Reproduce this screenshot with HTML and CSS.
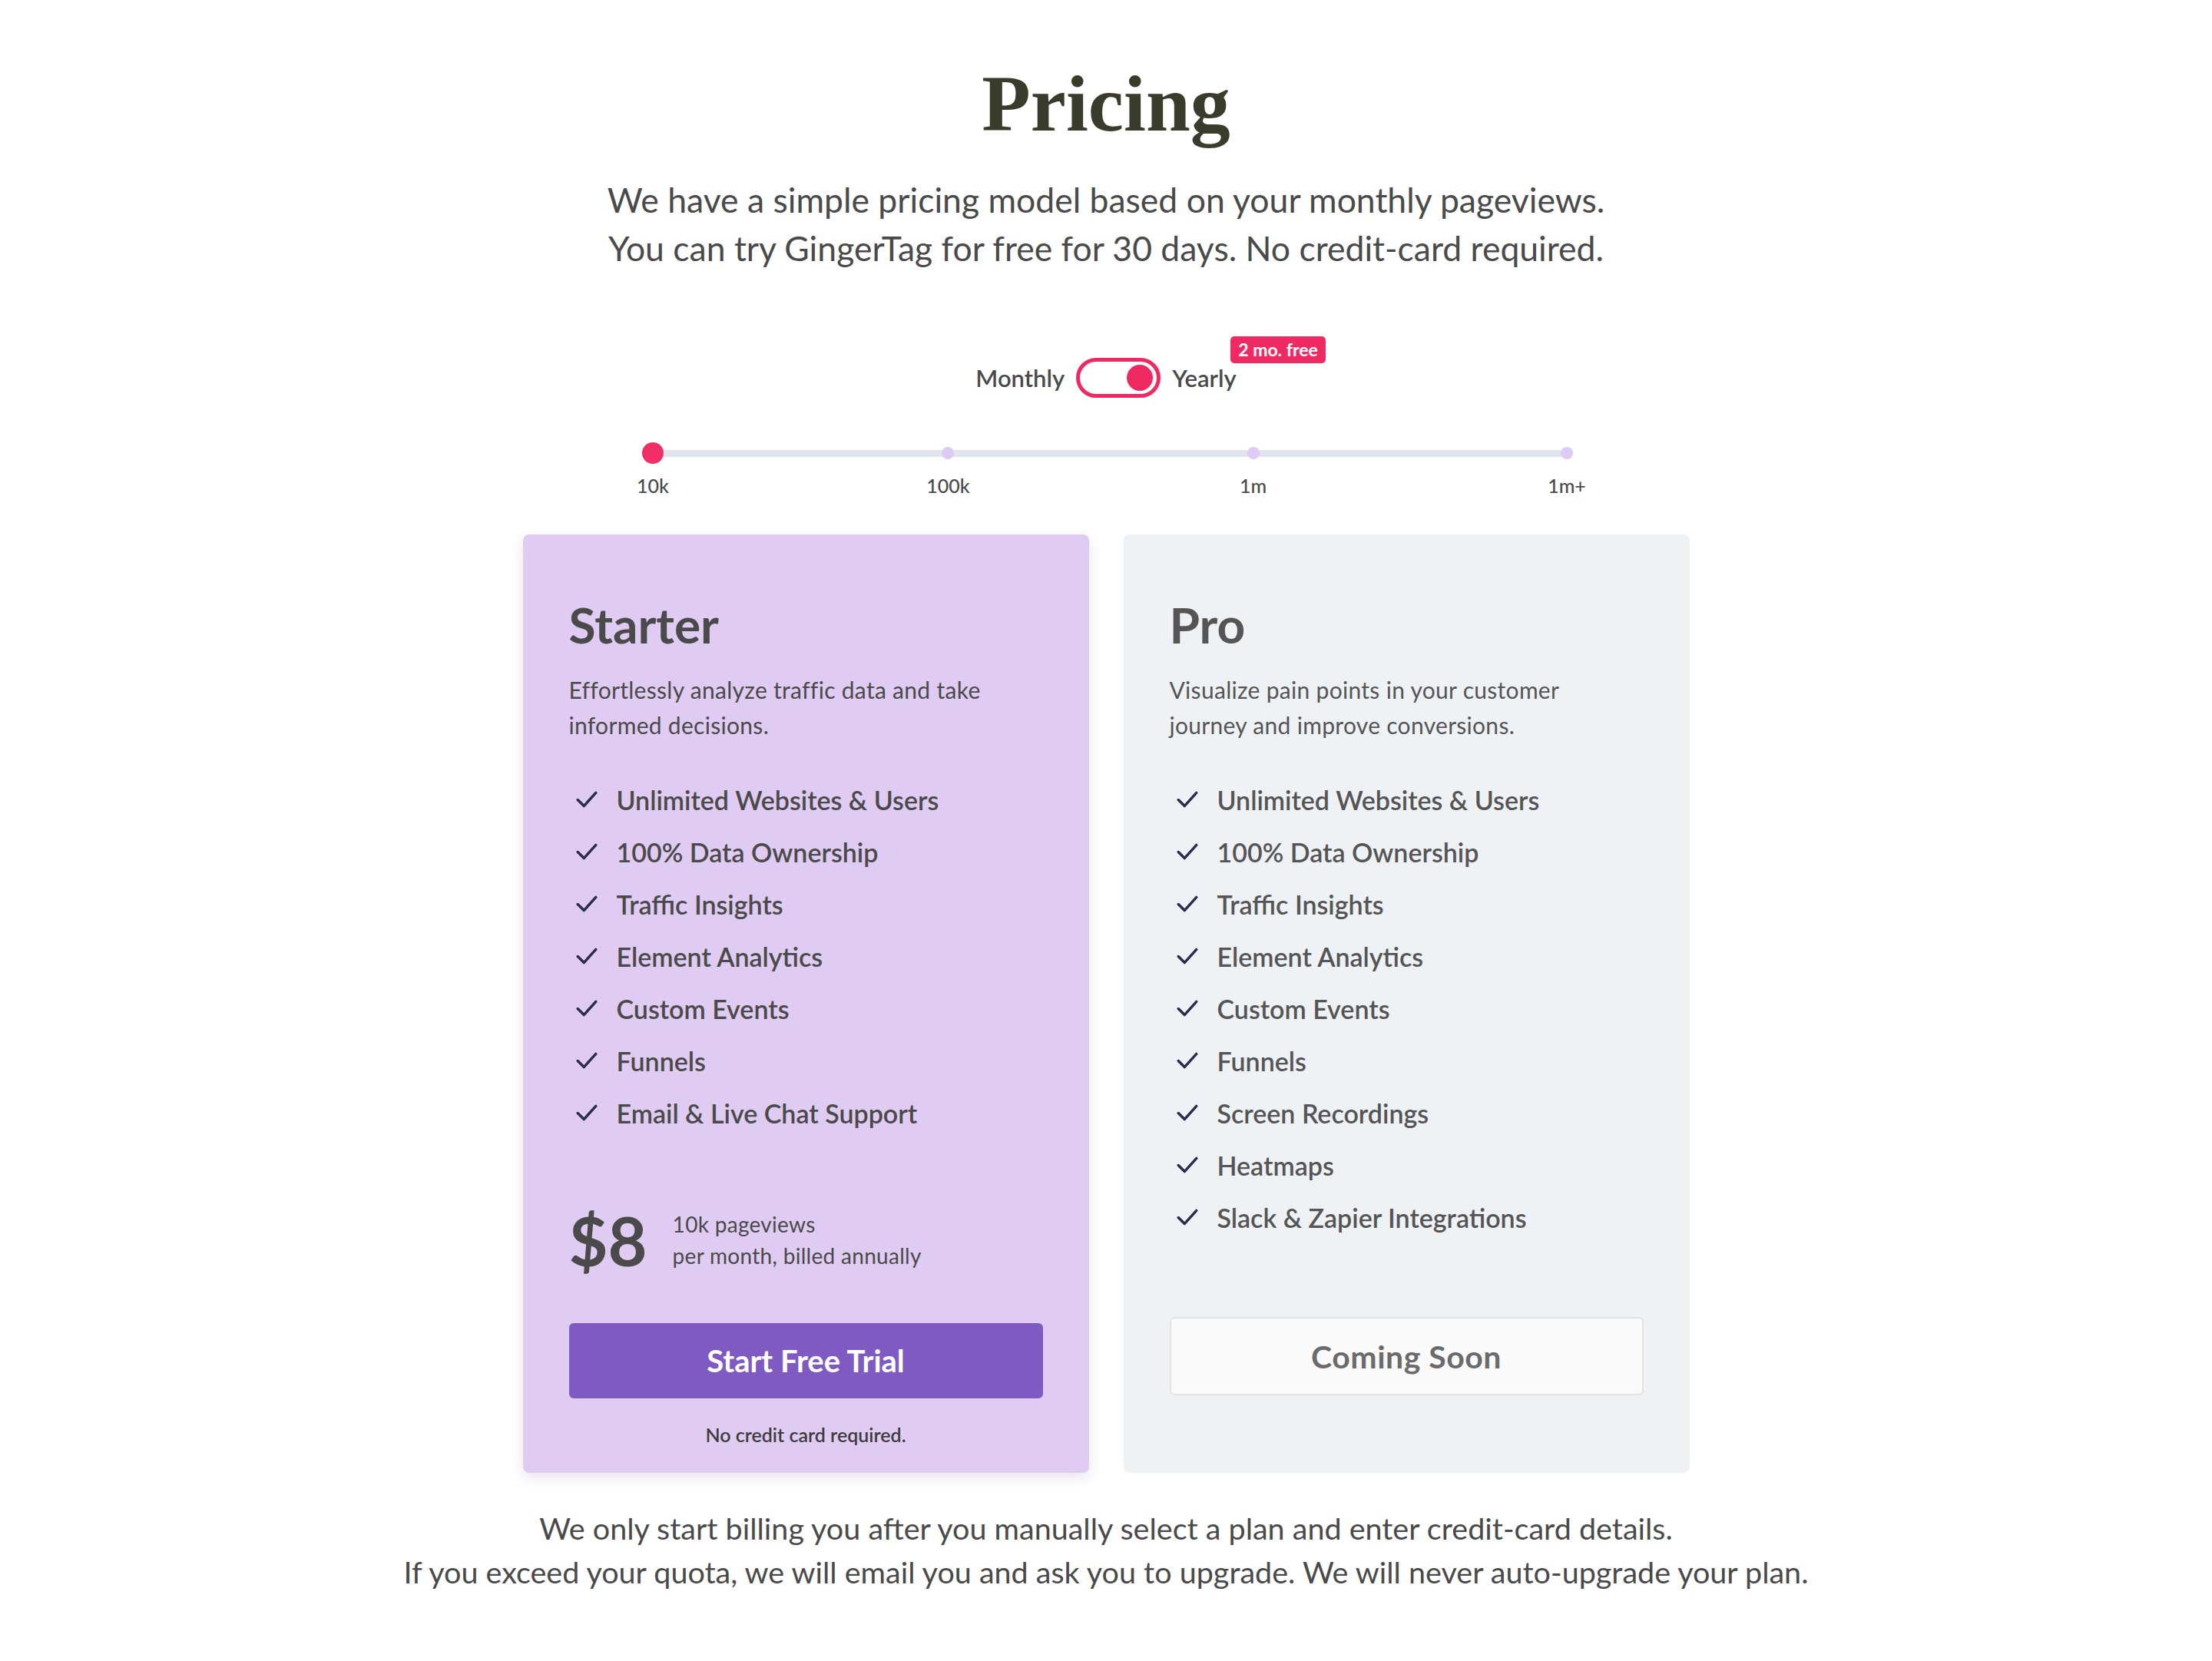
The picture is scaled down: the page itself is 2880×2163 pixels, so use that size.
FILE: index.html
```html
<!DOCTYPE html>
<html lang="en">
<head>
    <meta charset="UTF-8">
    <meta name="viewport" content="width=device-width, initial-scale=1.0">
    <title>Pricing</title>
    <link rel="stylesheet" href="styles.css">
</head>
<body>
    <main class="pricing">
        <h1 class="pricing-title">Pricing</h1>
        <p class="pricing-lead">
            We have a simple pricing model based on your monthly pageviews.<br>
            You can try GingerTag for free for 30 days. No credit-card required.
        </p>

        <div class="billing-toggle">
            <span class="toggle-label">Monthly</span>
            <span class="switch"><span class="switch-knob"></span></span>
            <span class="toggle-label yearly">Yearly<span class="badge">2 mo. free</span></span>
        </div>

        <div class="volume-slider">
            <div class="slider-stops">
                <div class="stop active"><span class="stop-dot"></span><span class="stop-label">10k</span></div>
                <div class="stop"><span class="stop-dot"></span><span class="stop-label">100k</span></div>
                <div class="stop"><span class="stop-dot"></span><span class="stop-label">1m</span></div>
                <div class="stop"><span class="stop-dot"></span><span class="stop-label">1m+</span></div>
            </div>
        </div>

        <div class="plans">
            <section class="plan plan-starter">
                <h2 class="plan-name">Starter</h2>
                <p class="plan-desc">Effortlessly analyze traffic data and take informed decisions.</p>
                <ul class="features">
                    <li><svg viewBox="0 0 28 24"><path d="M3 12.5 L10.5 20 L25 4"/></svg>Unlimited Websites &amp; Users</li>
                    <li><svg viewBox="0 0 28 24"><path d="M3 12.5 L10.5 20 L25 4"/></svg>100% Data Ownership</li>
                    <li><svg viewBox="0 0 28 24"><path d="M3 12.5 L10.5 20 L25 4"/></svg>Traffic Insights</li>
                    <li><svg viewBox="0 0 28 24"><path d="M3 12.5 L10.5 20 L25 4"/></svg>Element Analytics</li>
                    <li><svg viewBox="0 0 28 24"><path d="M3 12.5 L10.5 20 L25 4"/></svg>Custom Events</li>
                    <li><svg viewBox="0 0 28 24"><path d="M3 12.5 L10.5 20 L25 4"/></svg>Funnels</li>
                    <li><svg viewBox="0 0 28 24"><path d="M3 12.5 L10.5 20 L25 4"/></svg>Email &amp; Live Chat Support</li>
                </ul>
                <div class="price">
                    <span class="price-amount">$8</span>
                    <span class="price-meta">10k pageviews<br>per month, billed annually</span>
                </div>
                <button class="btn btn-primary" type="button">Start Free Trial</button>
                <p class="plan-fine">No credit card required.</p>
            </section>

            <section class="plan plan-pro">
                <h2 class="plan-name">Pro</h2>
                <p class="plan-desc">Visualize pain points in your customer journey and improve conversions.</p>
                <ul class="features">
                    <li><svg viewBox="0 0 28 24"><path d="M3 12.5 L10.5 20 L25 4"/></svg>Unlimited Websites &amp; Users</li>
                    <li><svg viewBox="0 0 28 24"><path d="M3 12.5 L10.5 20 L25 4"/></svg>100% Data Ownership</li>
                    <li><svg viewBox="0 0 28 24"><path d="M3 12.5 L10.5 20 L25 4"/></svg>Traffic Insights</li>
                    <li><svg viewBox="0 0 28 24"><path d="M3 12.5 L10.5 20 L25 4"/></svg>Element Analytics</li>
                    <li><svg viewBox="0 0 28 24"><path d="M3 12.5 L10.5 20 L25 4"/></svg>Custom Events</li>
                    <li><svg viewBox="0 0 28 24"><path d="M3 12.5 L10.5 20 L25 4"/></svg>Funnels</li>
                    <li><svg viewBox="0 0 28 24"><path d="M3 12.5 L10.5 20 L25 4"/></svg>Screen Recordings</li>
                    <li><svg viewBox="0 0 28 24"><path d="M3 12.5 L10.5 20 L25 4"/></svg>Heatmaps</li>
                    <li><svg viewBox="0 0 28 24"><path d="M3 12.5 L10.5 20 L25 4"/></svg>Slack &amp; Zapier Integrations</li>
                </ul>
                <button class="btn btn-muted" type="button">Coming Soon</button>
            </section>
        </div>

        <p class="pricing-note">
            We only start billing you after you manually select a plan and enter credit-card details.<br>
            If you exceed your quota, we will email you and ask you to upgrade. We will never auto-upgrade your plan.
        </p>
    </main>
</body>
</html>
```

FILE: styles.css
```css
body {
    margin: 0;
    background-color: #fff;
    font-family: Lato, "Open Sans", sans-serif;
    color: #4a4a4a;
}

.pricing {
    display: flex;
    flex-direction: column;
    align-items: center;
}

.pricing-title {
    font-family: "Liberation Serif", serif;
    font-weight: 700;
    font-size: 104px;
    line-height: 130px;
    margin: 70px 0 0;
    color: #3a3b2b;
}

.pricing-lead {
    font-size: 44.5px;
    line-height: 63px;
    margin: 28px 0 0;
    text-align: center;
}

/* monthly / yearly switch */
.billing-toggle {
    display: flex;
    align-items: center;
    gap: 15px;
    height: 52px;
    margin-top: 112px;
}

.toggle-label {
    font-size: 31px;
    font-weight: 600;
    line-height: 38px;
}

.yearly {
    position: relative;
}

.badge {
    position: absolute;
    left: 76px;
    top: -35px;
    padding: 0 10px;
    height: 35px;
    line-height: 35px;
    border-radius: 5px;
    background-color: #ef2a63;
    color: #fff;
    font-size: 23px;
    font-weight: 700;
    white-space: nowrap;
}

.switch {
    display: flex;
    justify-content: flex-end;
    align-items: center;
    box-sizing: border-box;
    width: 110px;
    height: 52px;
    padding: 0 5px;
    border: 5px solid #ef2a63;
    border-radius: 26px;
    background-color: #fff;
}

.switch-knob {
    width: 34px;
    height: 34px;
    border-radius: 50%;
    background-color: #ef2a63;
}

/* pageview slider */
.volume-slider {
    width: 1190px;
    margin: 58px 0 0 10px;
}

.slider-stops {
    position: relative;
    display: grid;
    grid-template-columns: 209fr 216fr 222fr 0;
}

.slider-stops::before {
    content: "";
    position: absolute;
    left: 0;
    right: 0;
    top: 10px;
    height: 9px;
    border-radius: 5px;
    background-color: #e1e5ee;
}

.stop {
    position: relative;
    width: 0;
    display: flex;
    flex-direction: column;
    align-items: center;
}

.stop-dot {
    width: 16px;
    height: 16px;
    margin: 6px 0;
    border-radius: 50%;
    background-color: #dccbf2;
}

.stop.active .stop-dot {
    width: 28px;
    height: 28px;
    margin: 0;
    background-color: #ef2f65;
}

.stop-label {
    margin-top: 13px;
    font-size: 25px;
    line-height: 30px;
    font-weight: 500;
    white-space: nowrap;
}

/* plan cards */
.plans {
    display: grid;
    grid-template-columns: 737px 737px;
    gap: 45px;
    margin-top: 49px;
}

.plan {
    display: flex;
    flex-direction: column;
    padding: 79px 60px 30px;
    border-radius: 8px;
}

.plan-starter {
    background-color: #e0cbf2;
    box-shadow: 0 6px 18px rgba(70, 40, 110, 0.12);
}

.plan-pro {
    background-color: #eff2f5;
    color: #555;
}

.plan-name {
    margin: 0;
    font-size: 64px;
    line-height: 77px;
    font-weight: 700;
}

.plan-desc {
    max-width: 590px;
    margin: 23px 0 0;
    font-size: 30px;
    line-height: 46px;
    letter-spacing: 0.3px;
}

.features {
    list-style: none;
    padding: 0;
    margin: 40px 0 0;
}

.features li {
    display: flex;
    align-items: center;
    height: 68px;
    font-size: 34px;
    font-weight: 600;
}

.features svg {
    width: 30px;
    height: 26px;
    margin: 0 24px 0 8px;
    fill: none;
    stroke: #2a2b4d;
    stroke-width: 3.2;
    stroke-linecap: round;
    stroke-linejoin: round;
}

.price {
    display: flex;
    align-items: center;
    margin-top: 88px;
}

.price-amount {
    font-size: 88px;
    line-height: 88px;
    font-weight: 700;
}

.price-meta {
    margin-left: 33px;
    font-size: 28px;
    line-height: 41px;
    letter-spacing: 0.3px;
}

.btn {
    display: block;
    width: 100%;
    height: 98px;
    border: none;
    border-radius: 6px;
    font-family: inherit;
    font-size: 40px;
    font-weight: 700;
    cursor: pointer;
}

.btn-primary {
    margin-top: 64px;
    background-color: #7e5ac2;
    color: #fff;
}

.btn-muted {
    margin-top: 96px;
    height: 102px;
    background-color: #fafafa;
    border: 2px solid #e3e3e3;
    color: #6b6b6b;
    font-size: 41px;
    letter-spacing: 0.5px;
}

.plan-fine {
    margin: 27px 0 0;
    text-align: center;
    font-size: 25px;
    line-height: 40px;
    font-weight: 600;
    color: #3d3d3d;
}

.pricing-note {
    margin: 43px 0 0;
    font-size: 39.5px;
    line-height: 57px;
    text-align: center;
}
```
